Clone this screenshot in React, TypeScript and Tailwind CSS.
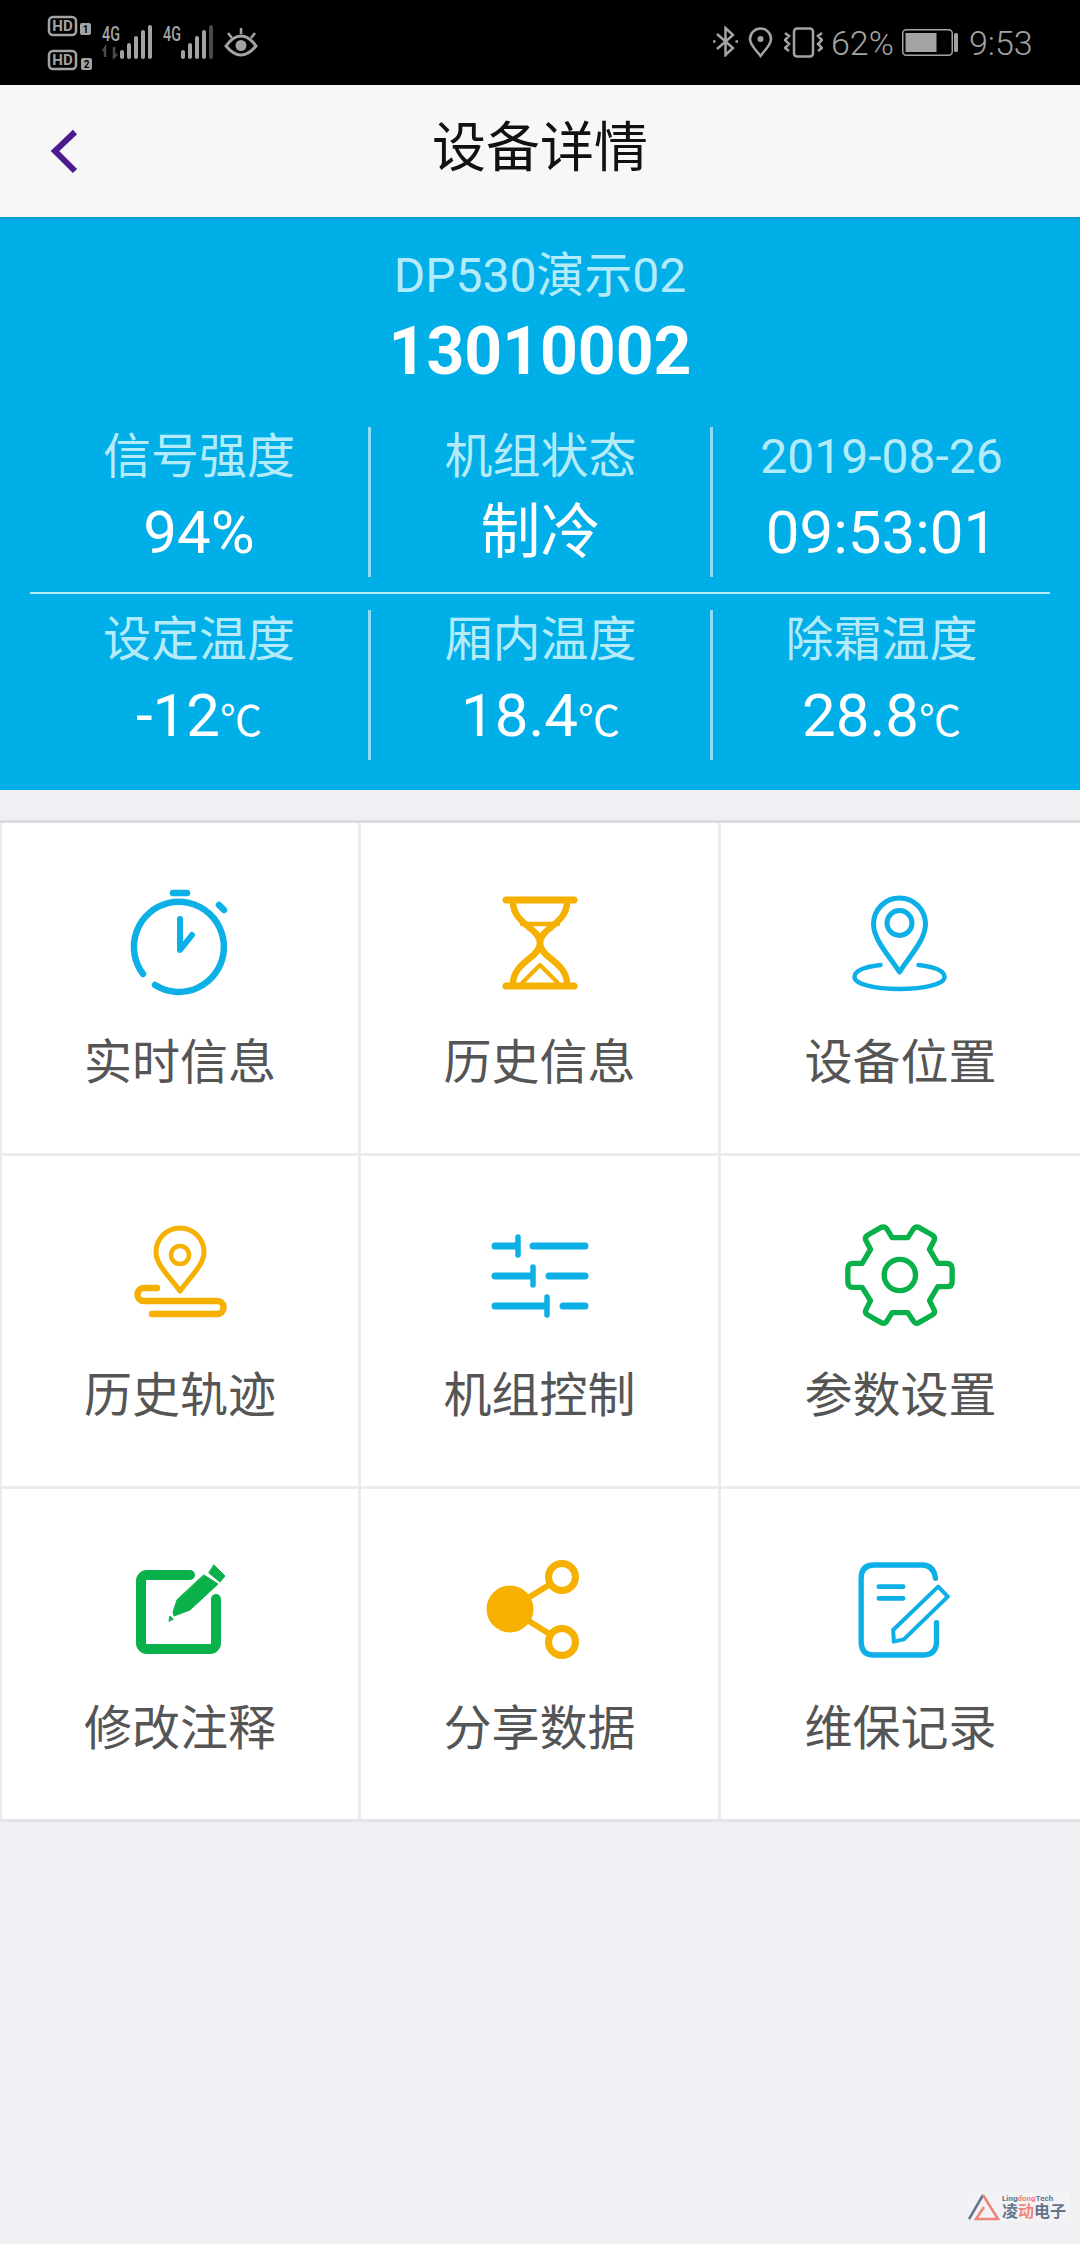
const BLUE = '#0cafe6';
const YELLOW = '#f5b000';
const GREEN = '#0ab14b';

function IconBox({ children }: { children: React.ReactNode }) {
  return (
    <svg width="120" height="120" viewBox="0 0 120 120" fill="none" strokeLinecap="round" strokeLinejoin="round">
      {children}
    </svg>
  );
}

const icons: Record<string, React.ReactNode> = {
  stopwatch: (
    <g stroke={BLUE} strokeWidth="6.5">
      <path d="M35 105A45 45 0 1 0 23 94" />
      <path d="M53 13H67" />
      <path d="M99 25L104 30" />
      <path d="M60 39V70L72 55" strokeWidth="6" />
    </g>
  ),
  hourglass: (
    <g stroke={YELLOW}>
      <path d="M26 20H94M26 106H94" strokeWidth="7" />
      <path d="M33 22C33 44 60 48 60 63C60 78 33 82 33 104M87 22C87 44 60 48 60 63C60 78 87 82 87 104" strokeWidth="6.5" />
      <path d="M42 44H78" strokeWidth="4.5" />
      <path d="M42 103L60 85L78 103" strokeWidth="4" />
    </g>
  ),
  place: (
    <g stroke={BLUE} transform="translate(-1.500 0)">
      <path d="M60 92C50 76 34 60 34 44A26 26 0 0 1 86 44C86 60 70 76 60 92Z" strokeWidth="5" />
      <circle cx="60" cy="43" r="12.500" strokeWidth="5" />
      <path d="M41 85C24 87 15 91 15 97C15 104 35 109 60 109C85 109 105 104 105 97C105 91 96 87 79 85" strokeWidth="4.500" />
    </g>
  ),
  track: (
    <g stroke={YELLOW}>
      <path d="M60 78C50 64 36 52 36 39A24 24 0 0 1 84 39C84 52 70 64 60 78Z" strokeWidth="5" />
      <circle cx="60" cy="42" r="9" strokeWidth="4.500" />
      <path d="M37 75H24A6.500 6.500 0 0 0 24 88H97A6.500 6.500 0 0 1 97 101H32" strokeWidth="6.500" />
    </g>
  ),
  sliders: (
    <g stroke={BLUE}>
      <path d="M15 33H36M53 33H105M15 63H50M69 63H105M15 93H64M83 93H105" strokeWidth="7" />
      <path d="M38 24V42M53 54V72M67 84V102" strokeWidth="5.500" />
    </g>
  ),
  gear: (
    <g stroke={GREEN} transform="translate(-10.500 -3) scale(0.3333)" strokeWidth="16">
      <path d="M185 83H232L248 58Q255 48 265 52L305 75Q316 82 310 93L297 118L322 160H350Q365 162 365 175V215Q365 230 350 230H322L297 272L310 298Q316 308 305 315L265 338Q255 344 248 332L232 308H185L170 332Q163 344 152 338L112 315Q101 308 107 298L120 272L95 232H65Q52 230 52 215V175Q52 162 65 160H95L120 118L107 93Q101 82 112 75L152 52Q163 48 170 58Z" />
      <circle cx="208" cy="195" r="47" />
    </g>
  ),
  edit: (
    <g>
      <path d="M70 29H27A6 6 0 0 0 21 35V97A6 6 0 0 0 27 103H90A6 6 0 0 0 96 97V53" stroke={GREEN} strokeWidth="10" />
      <path d="M94 19L105 30L100 36L89 27Z" fill={GREEN} stroke={GREEN} strokeWidth="1" />
      <path d="M84 29L98 38L70 64L54 70L53 66L57 54Z" fill={GREEN} stroke={GREEN} strokeWidth="1" />
      <path d="M49 75L50 70L53 73Z" fill={GREEN} stroke={GREEN} strokeWidth="1" />
    </g>
  ),
  share: (
    <g stroke={YELLOW}>
      <path d="M30 63L82 31M30 63L82 96" strokeWidth="6" />
      <circle cx="30" cy="63" r="23.500" fill={YELLOW} stroke="none" />
      <circle cx="82" cy="31" r="13.500" fill="#fff" strokeWidth="7" />
      <circle cx="82" cy="96" r="13.500" fill="#fff" strokeWidth="7" />
    </g>
  ),
  note: (
    <g stroke={BLUE} transform="translate(-0.500 4) scale(0.3333)">
      <path d="M285 85Q280 45 245 45H100Q62 45 62 85V275Q62 315 100 315H245Q288 315 288 275V218" strokeWidth="16" />
      <path d="M115 110H188M115 145H188" strokeWidth="14" />
      <path d="M293 110L322 140L190 268L160 275L158 240Z" strokeWidth="12" />
    </g>
  ),
};

const menu = [
  { label: '实时信息', icon: 'stopwatch' },
  { label: '历史信息', icon: 'hourglass' },
  { label: '设备位置', icon: 'place' },
  { label: '历史轨迹', icon: 'track' },
  { label: '机组控制', icon: 'sliders' },
  { label: '参数设置', icon: 'gear' },
  { label: '修改注释', icon: 'edit' },
  { label: '分享数据', icon: 'share' },
  { label: '维保记录', icon: 'note' },
];

function StatusLeft() {
  const c = '#a3a3a3';
  return (
    <svg width="270" height="85" viewBox="0 0 270 85" fill="none">
      <rect x="49" y="17" width="27" height="18" rx="4" stroke={c} strokeWidth="2.500" />
      <text x="62.500" y="31" textAnchor="middle" fontSize="15" fontWeight="700" fill={c} fontFamily="Roboto">HD</text>
      <rect x="80" y="23" width="11" height="12" rx="2" fill={c} />
      <text x="85.500" y="33" textAnchor="middle" fontSize="10" fontWeight="700" fill="#000" fontFamily="Roboto">1</text>
      <rect x="49" y="51" width="27" height="18" rx="4" stroke={c} strokeWidth="2.500" />
      <text x="62.500" y="65" textAnchor="middle" fontSize="15" fontWeight="700" fill={c} fontFamily="Roboto">HD</text>
      <rect x="81" y="58" width="11" height="12" rx="2" fill={c} />
      <text x="86.500" y="68" textAnchor="middle" fontSize="10" fontWeight="700" fill="#000" fontFamily="Roboto">2</text>
      <text x="102" y="41" fontSize="21" fontWeight="500" fill={c} fontFamily="Roboto" textLength="18" lengthAdjust="spacingAndGlyphs">4G</text>
      <path d="M105 57V48L103 51M114 47V57L117 54" stroke="#4a4a4a" strokeWidth="2.500" />
      <path d="M122 52V57M129 45V57M136 38V57M143 32V57M150 27V57" stroke={c} strokeWidth="4" strokeLinecap="round" />
      <text x="163" y="41" fontSize="21" fontWeight="500" fill={c} fontFamily="Roboto" textLength="18" lengthAdjust="spacingAndGlyphs">4G</text>
      <path d="M183 52V57M190 45V57M197 38V57M204 32V57" stroke={c} strokeWidth="4" strokeLinecap="round" />
      <path d="M211 27V57" stroke="#4a4a4a" strokeWidth="4" strokeLinecap="round" />
      <path d="M226 46C231 39 236 36 241 36C246 36 251 39 256 46C251 52 246 55 241 55C236 55 231 52 226 46Z" stroke={c} strokeWidth="3" />
      <circle cx="241" cy="45.500" r="5.500" fill={c} />
      <path d="M241 28V34M228 33L232 38M255 33L251 38" stroke={c} strokeWidth="2.500" />
    </svg>
  );
}

function StatusRight() {
  const c = '#a3a3a3';
  return (
    <div className="flex items-center pr-[49px] text-[#a3a3a3] font-light">
      <svg width="25" height="31" viewBox="0 0 25 31" fill="none" stroke={c} strokeWidth="2.500" className="mt-[-2px]">
        <path d="M4 8L20 22L12.500 29V2L20 9L4 23" />
        <path d="M0 15.500H2.500M22.500 15.500H25" />
      </svg>
      <svg width="25" height="31" viewBox="0 0 25 31" fill="none" stroke={c} strokeWidth="2.500" className="ml-[10px] mt-[-1px]">
        <path d="M12.500 29C8 23 2 18 2 12A10.500 10.500 0 0 1 23 12C23 18 17 23 12.500 29Z" />
        <circle cx="12.500" cy="12" r="3" fill={c} stroke="none" />
      </svg>
      <svg width="39" height="31" viewBox="0 0 39 31" fill="none" stroke={c} strokeWidth="2.500" className="ml-[11px] mt-[-1px]">
        <rect x="10" y="1.500" width="19" height="28" rx="3" />
        <path d="M1 6L5 9L1 13L5 17L1 21L5 24M38 6L34 9L38 13L34 17L38 21L34 24" />
      </svg>
      <span className="ml-[8px] text-[34px] leading-[40px] w-[60px] whitespace-nowrap">62%</span>
      <svg width="56" height="27" viewBox="0 0 56 27" fill="none" className="ml-[11px]">
        <rect x="0.750" y="0.750" width="49.500" height="25.500" rx="3.500" stroke={c} strokeWidth="1.500" />
        <rect x="3.500" y="4" width="31" height="19" fill={c} />
        <rect x="52" y="4" width="4" height="19" rx="1.500" fill={c} />
      </svg>
      <span className="ml-[11px] w-[62px] text-[34px] leading-[40px] whitespace-nowrap">9:53</span>
    </div>
  );
}

function Stat({ label, value, unit }: { label: string; value: string; unit?: string }) {
  return (
    <div className="flex flex-col items-center pt-[2px]">
      <div className="text-[48px] leading-[56px] text-[#b4ebfb]">{label}</div>
      <div className="mt-[13px] text-[60px] leading-[70px] text-white whitespace-nowrap">
        {value}
        {unit && <span className="text-[42px]">{unit}</span>}
      </div>
    </div>
  );
}

function StatRow({ items }: { items: { label: string; value: string; unit?: string }[] }) {
  return (
    <div className="grid grid-cols-[338px_342px_340px] h-[150px]">
      {items.map((item, i) => (
        <div key={item.label} className={i > 0 ? 'border-l-[3px] border-[#8fdef6]' : ''}>
          <Stat {...item} />
        </div>
      ))}
    </div>
  );
}

export default function App() {
  return (
    <div className="relative w-[1080px] h-[2244px] bg-[#efeff4] overflow-hidden font-[Roboto,'Noto_Sans_CJK_SC',sans-serif]">
      <div className="h-[85px] bg-black flex items-center justify-between">
        <StatusLeft />
        <StatusRight />
      </div>

      <div className="relative z-10 h-[132px] bg-[#f7f7f8] grid grid-cols-[1fr_auto_1fr] items-center shadow-[0_2px_3px_rgba(0,0,0,0.12)]">
        <svg width="40" height="50" viewBox="0 0 40 50" fill="none" className="ml-[46px]">
          <path d="M29 6L9 25L29 45" stroke="#4b1a8f" strokeWidth="6" />
        </svg>
        <h1 className="text-[54px] leading-[64px] text-[#111] font-normal mb-[4px]">设备详情</h1>
        <div />
      </div>

      <div className="h-[573px] bg-[#00aee8] px-[30px]">
        <div className="flex flex-col items-center pt-[29px]">
          <div className="text-[48px] leading-[60px] text-[#b4ebfb]">DP530演示02</div>
          <div className="mt-[6px] text-[66px] leading-[80px] font-bold text-white">13010002</div>
        </div>
        <div className="mt-[35px]">
          <StatRow
            items={[
              { label: '信号强度', value: '94%' },
              { label: '机组状态', value: '制冷' },
              { label: '2019-08-26', value: '09:53:01' },
            ]}
          />
          <div className="mt-[15px] mb-[16px] h-[2px] bg-[#b4ebfb]" />
          <StatRow
            items={[
              { label: '设定温度', value: '-12', unit: '℃' },
              { label: '厢内温度', value: '18.4', unit: '℃' },
              { label: '除霜温度', value: '28.8', unit: '℃' },
            ]}
          />
        </div>
      </div>

      <div className="mt-[30px] border-y-[3px] border-t-[#dcdce0] border-b-[#e4e4e8] bg-[#ececee] pl-[2px] grid grid-cols-[356px_357px_359px] gap-[3px]">
        {menu.map((m) => (
          <div key={m.label} className="h-[330px] bg-white flex flex-col items-center pt-[57px]">
            <IconBox>{icons[m.icon]}</IconBox>
            <div className="mt-[33px] text-[48px] leading-[60px] text-[#555]">{m.label}</div>
          </div>
        ))}
      </div>

      <div className="absolute left-[968px] top-[2192px] w-[102px] h-[30px] flex items-center bg-[#f3f3f6]">
        <svg width="32" height="28" viewBox="0 0 32 28" fill="none" strokeWidth="2.500">
          <path d="M1 26L15 2" stroke="#64748b" />
          <path d="M15 2L30 26H8L16 14" stroke="#f0837a" />
        </svg>
        <div className="ml-[2px] flex flex-col">
          <span className="text-[8px] leading-[9px] font-bold text-[#64748b] whitespace-nowrap">
            Ling<span className="text-[#f0837a]">dong</span>Tech
          </span>
          <span className="text-[16px] leading-[17px] font-bold text-[#64748b] whitespace-nowrap">
            凌<span className="text-[#f0837a]">动</span>电子
          </span>
        </div>
      </div>
    </div>
  );
}
